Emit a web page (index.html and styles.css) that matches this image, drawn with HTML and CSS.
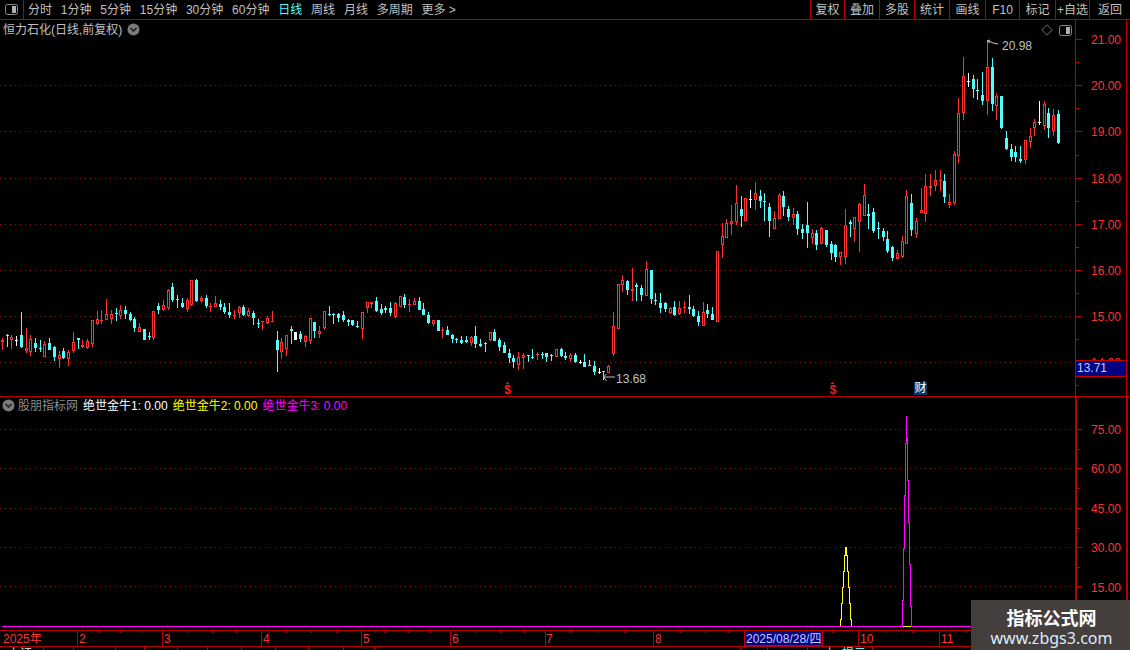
FILE: index.html
```html
<!DOCTYPE html>
<html lang="zh-CN">
<head>
<meta charset="utf-8">
<title>恒力石化 日线</title>
<link rel="stylesheet" href="styles.css">
</head>
<body>
<div class="app">
  <header class="toolbar">
    <div class="layout-btn">
      <svg class="win-icon" width="13" height="11" viewBox="0 0 13 11"><rect x=".5" y=".5" width="12" height="10" rx="2" class="win-frame"/><rect x="7" y="2" width="4" height="7" class="win-fill"/></svg>
    </div>
    <nav class="periods">
      <span>分时</span><span>1分钟</span><span>5分钟</span><span>15分钟</span><span>30分钟</span><span>60分钟</span>
      <span class="active">日线</span><span>周线</span><span>月线</span><span>多周期</span><span>更多 &gt;</span>
    </nav>
    <div class="tools">
      <span>复权</span><span>叠加</span><span>多股</span><span>统计</span><span>画线</span><span>F10</span><span>标记</span><span>+自选</span><span>返回</span>
    </div>
  </header>

  <section class="pane pane-price">
    <div class="plot">
      <svg class="chart" width="1075" height="376" viewBox="0 20 1075 376">
        <g class="grid">
          <line x1="0" x2="1075" y1="85.5" y2="85.5"/><line x1="0" x2="1075" y1="131.5" y2="131.5"/>
          <line x1="0" x2="1075" y1="178.5" y2="178.5"/><line x1="0" x2="1075" y1="224.5" y2="224.5"/>
          <line x1="0" x2="1075" y1="270.5" y2="270.5"/><line x1="0" x2="1075" y1="316.5" y2="316.5"/>
          <line x1="0" x2="1075" y1="362.5" y2="362.5"/>
        </g>
        <g id="candles" shape-rendering="crispEdges"></g>
        <path class="mark-line" d="M987 41l3 -1M987 41l3 2M987 41h2l4 2l5 1"/>
        <text class="mark-text" x="1002" y="50">20.98</text>
        <path class="mark-line" d="M603.5 377H615M603.5 377l3 -3M603.5 377l3 4"/>
        <text class="mark-text" x="616" y="383">13.68</text>
        <g class="dollar">
          <path d="M507.5 382l2 2h-4zM832.5 382l2 2h-4z"/>
          <text x="507.5" y="394">$</text>
          <text x="833" y="394">$</text>
        </g>
      </svg>
      <div class="stock-title">
        <span>恒力石化(日线,前复权)</span>
        <svg class="chevron" width="13" height="13" viewBox="0 0 13 13"><circle cx="6.5" cy="6.5" r="6" class="chev-bg"/><path d="M3.5 5l3 3l3 -3" class="chev-mark"/></svg>
      </div>
      <div class="chart-tools">
        <svg width="12" height="12" viewBox="0 0 12 12"><path d="M6 .8L11.2 6L6 11.2L.8 6z" class="diamond"/></svg>
        <svg class="win-icon" width="13" height="11" viewBox="0 0 13 11"><rect x=".5" y=".5" width="12" height="10" rx="2" class="win-frame"/><rect x="7" y="2" width="4" height="7" class="win-fill"/></svg>
      </div>
      <span class="cai">财</span>
    </div>
    <div class="axis">
      <svg class="chart" width="50" height="376" viewBox="1076 20 50 376">
        <path class="tick" d="M1076 39.5h6M1076 85.5h6M1076 131.5h6M1076 178.5h6M1076 224.5h6M1076 270.5h6M1076 316.5h6M1076 362.5h6M1076 62.5h3M1076 108.5h3M1076 155.5h3M1076 201.5h3M1076 247.5h3M1076 293.5h3M1076 339.5h3M1076 385.5h3"/>
        <g class="axis-text">
          <text x="1091" y="44">21.00</text><text x="1091" y="90">20.00</text><text x="1091" y="136">19.00</text>
          <text x="1091" y="183">18.00</text><text x="1091" y="229">17.00</text><text x="1091" y="275">16.00</text>
          <text x="1091" y="321">15.00</text><text x="1091" y="367">14.00</text>
        </g>
      </svg>
      <div class="price-tag">13.71</div>
    </div>
  </section>

  <section class="pane pane-ind">
    <div class="plot">
      <svg class="chart" width="1075" height="233" viewBox="0 397 1075 233">
        <g class="grid">
          <line x1="0" x2="1075" y1="429.5" y2="429.5"/><line x1="0" x2="1075" y1="468.5" y2="468.5"/>
          <line x1="0" x2="1075" y1="508.5" y2="508.5"/><line x1="0" x2="1075" y1="547.5" y2="547.5"/>
          <line x1="0" x2="1075" y1="586.5" y2="586.5"/>
        </g>
        <g shape-rendering="crispEdges">
          <path class="line-magenta" d="M2 626.5H1075"/>
          <path class="line-yellow" d="M840.5 626V619H841.5V603H842.5V587H843.5V571H844.5V555H845.5V547H846.5V555H847.5V571H848.5V587H849.5V603H850.5V619H851.5V626"/>
          <path class="line-yellow" d="M903 626.5H911"/>
          <path class="line-magenta" d="M902.5 626V600H903.5V548H904.5V495H905.5V443H906.5V416M907.5 438V480H908.5V522H909.5V564H910.5V606H911.5V626"/>
          <path class="line-magenta" d="M906.5 416V443M907.5 438V443"/>
        </g>
      </svg>
      <div class="ind-title">
        <svg class="chevron" width="13" height="13" viewBox="0 0 13 13"><circle cx="6.5" cy="6.5" r="6" class="chev-bg"/><path d="M3.5 5l3 3l3 -3" class="chev-mark"/></svg>
        <span class="ind-name">股朋指标网</span>
        <span class="v-white">绝世金牛1: 0.00</span>
        <span class="v-yellow">绝世金牛2: 0.00</span>
        <span class="v-magenta">绝世金牛3: 0.00</span>
      </div>
    </div>
    <div class="axis axis-heavy">
      <svg class="chart" width="49" height="233" viewBox="1077 397 49 233">
        <path class="tick" d="M1077 429.5h5M1077 468.5h5M1077 508.5h5M1077 547.5h5M1077 586.5h5M1077 449.5h3M1077 488.5h3M1077 528.5h3M1077 567.5h3M1077 606.5h3"/>
        <g class="axis-text">
          <text x="1091" y="434">75.00</text><text x="1091" y="473">60.00</text><text x="1091" y="513">45.00</text>
          <text x="1091" y="552">30.00</text><text x="1091" y="592">15.00</text>
        </g>
      </svg>
    </div>
  </section>

  <section class="xaxis">
    <svg class="chart" width="1130" height="15" viewBox="0 631 1130 15">
      <path class="tick" d="M77.5 631v15M162.5 631v15M261.5 631v15M361.5 631v15M450.5 631v15M545.5 631v15M653.5 631v15M858.5 631v15M939.5 631v15"/>
      <path class="tick" d="M98.5 631v2M120.5 631v2M141.5 631v2M187.5 631v2M212.5 631v2M236.5 631v2M286.5 631v2M311.5 631v2M336.5 631v2M384.5 631v2M408.5 631v2M430.5 631v2M475.5 631v2M500.5 631v2M524.5 631v2M570.5 631v2M597.5 631v2M624.5 631v2M680.5 631v2M705.5 631v2M728.5 631v2M832.5 631v2M885.5 631v2M912.5 631v2M965.5 631v2"/>
      <g class="axis-text">
        <text x="3" y="643">2025年</text><text x="79" y="643">2</text><text x="164" y="643">3</text><text x="263" y="643">4</text>
        <text x="363" y="643">5</text><text x="452" y="643">6</text><text x="546" y="643">7</text><text x="655" y="643">8</text>
        <text x="860" y="643">10</text><text x="941" y="643">11</text>
      </g>
      <rect class="date-box" x="744.5" y="630.5" width="78" height="15"/>
      <text class="date-text" x="746" y="643">2025/08/28/四</text>
    </svg>
  </section>

  <footer class="status">
    <svg width="1130" height="3" viewBox="0 647 1130 3">
      <path class="tick" d="M43.5 647v3M73.5 647v3M115.5 647v3M144.5 647v3M177.5 647v3M207.5 647v3M241.5 647v3M275.5 647v3M308.5 647v3M343.5 647v3M374.5 647v3M740.5 647v3M767.5 647v3M807.5 647v3M872.5 647v3"/>
      <text class="status-white" x="8" y="658">上证</text>
      <text class="status-white" x="824" y="658">上</text>
      <text class="status-cyan" x="842" y="658">提示</text>
    </svg>
  </footer>

  <aside class="watermark">
    <strong>指标公式网</strong>
    <span>www.zbgs3.com</span>
  </aside>
</div>
<script src="chart.js"></script>
</body>
</html>
```
FILE: styles.css
```css
* { box-sizing: border-box; }
html, body { margin: 0; padding: 0; background: #000; }
body { font: 12px/1 "Liberation Sans", "Noto Sans CJK SC", sans-serif; color: #c0c0c0; overflow: hidden; }
svg { display: block; }
svg text { font-family: "Liberation Sans", "Noto Sans CJK SC", sans-serif; font-size: 12px; }

.app { position: relative; width: 1130px; height: 650px; display: flex; flex-direction: column; overflow: hidden; background: #000; }

.toolbar { height: 20px; display: flex; align-items: stretch; border-bottom: 1px solid #b80000; }
.layout-btn { width: 24px; display: flex; align-items: center; padding-left: 5px; border-right: 1px solid #b80000; }
.win-frame { fill: none; stroke: #8a8a8a; }
.win-fill { fill: #b0b0b0; }
.periods { display: flex; align-items: center; gap: 8.8px; padding-left: 4px; }
.periods .active { color: #54fcfc; }
.tools { margin-left: auto; width: 320px; display: grid; grid-template-columns: 34px 35px 35px 35px 36px 34px 36px 34px 41px; }
.tools span { display: flex; align-items: center; justify-content: center; border-left: 1px solid #b80000; white-space: nowrap; }

.pane { display: flex; }
.pane-price { height: 377px; border-bottom: 1px solid #b80000; }
.pane-ind { height: 233px; }
.plot { position: relative; width: 1075px; flex: none; }
.axis { position: relative; width: 52px; flex: none; border-left: 1px solid #b80000; border-right: 1px solid #b80000; }
.axis-heavy { border-left-width: 2px; border-right-width: 2px; width: 53px; }

.grid line { stroke: #8c1414; stroke-width: 1; stroke-dasharray: 1 4; shape-rendering: crispEdges; }
.tick { stroke: #b80000; stroke-width: 1; fill: none; shape-rendering: crispEdges; }
.axis-text text { fill: #ff3232; }
.mark-line { fill: none; stroke: #c0c0c0; stroke-width: 1; }
.mark-text { fill: #c0c0c0; }
.dollar { fill: #ff1414; }
svg .dollar text { font-family: "Liberation Sans", sans-serif; font-weight: 700; font-size: 12px; text-anchor: middle; }

.stock-title { position: absolute; left: 3px; top: 3px; display: flex; align-items: center; gap: 5px; height: 13px; }
.chevron { flex: none; }
.chev-bg { fill: #7a7a7a; }
.chev-mark { fill: none; stroke: #1c1c1c; stroke-width: 1.5; }
.chart-tools { position: absolute; right: 3px; top: 4px; display: flex; align-items: center; gap: 6px; }
.diamond { fill: none; stroke: #707070; }
.cai { position: absolute; left: 914px; top: 362px; width: 13px; height: 13px; background: #003c6e; color: #fff; text-align: center; line-height: 13px; }

.price-tag { position: absolute; left: 0; right: 0; top: 340px; height: 17px; padding-left: 1px; background: #000080; border-top: 1px solid #c80000; border-bottom: 1px solid #c80000; color: #c8c8ff; line-height: 15px; }

.ind-title { position: absolute; left: 2px; top: 2px; display: flex; align-items: center; gap: 5px; height: 13px; white-space: nowrap; }
.ind-title .chevron { margin-right: -2px; }
.ind-name { color: #8c8c8c; }
.v-white { color: #fff; }
.v-yellow { color: #ffff00; }
.v-magenta { color: #ff00ff; }
.line-magenta { fill: none; stroke: #ff00ff; stroke-width: 1; }
.line-yellow { fill: none; stroke: #ffff00; stroke-width: 1; }

.xaxis { height: 17px; border-top: 1px solid #b80000; border-bottom: 1px solid #b80000; }
.date-box { fill: #000080; stroke: #c80000; stroke-width: 1; shape-rendering: crispEdges; }
.date-text { fill: #c8c8ff; }

.status { height: 3px; overflow: hidden; }
.status-white { fill: #e0e0e0; }
.status-cyan { fill: #54fcfc; }

.watermark { position: absolute; left: 971px; top: 600px; width: 159px; height: 50px; background: #443e3c; display: flex; flex-direction: column; align-items: center; gap: 2px; padding-top: 7px; padding-left: 2px; color: #fff; }
.watermark strong { font: 700 18px/20px "Noto Sans CJK SC", sans-serif; }
.watermark span { font: 400 16px/19px "Noto Sans", sans-serif; color: #dcecff; }
```
FILE: chart.js
```js
// Daily candles: [x, high, bodyTop, bodyBottom, low, kind], coordinates read at 3x, grouped by origin.
var segments = [
  { ox: 0, oy: 270, rows: [
    [7,205,210,218,240,'r'],[21,192,197,199,232,'c'],[35,195,201,212,237,'r'],[49,198,212,214,228,'w'],[64,126,195,233,234,'c'],
    [79,175,235,245,250,'r'],[91,196,207,248,258,'r'],[106,205,219,234,246,'c'],[121,212,235,237,248,'c'],[134,215,222,261,262,'r'],
    [148,205,219,240,241,'c'],[163,228,231,263,273,'c'],[178,245,256,268,294,'r'],[190,234,243,264,269,'c'],[205,240,246,269,288,'r'],
    [220,186,216,245,250,'r'],[235,204,204,212,237,'c'],[247,212,225,231,236,'r'],[262,207,213,236,237,'r'],[277,150,152,224,232,'r'],
    [292,125,148,162,165,'r'],[305,120,151,153,162,'r'],[320,87,132,150,150,'r'],[335,120,132,147,162,'r'],[349,114,130,133,155,'c'],
    [362,105,120,138,147,'r'],[376,108,120,132,148,'c'],[391,128,132,150,155,'c'],[404,142,147,174,186,'c'],[419,160,172,186,186,'r'],
    [433,177,177,212,212,'c'],[448,186,198,201,212,'c'],[461,124,124,205,212,'r'],[476,101,110,120,132,'c'],[490,90,105,122,124,'r'],
    [505,57,60,115,120,'r'],[518,40,51,90,96,'c'],[532,75,88,90,114,'c'],[547,84,99,111,114,'c'],[562,85,90,117,126,'r'],
    [575,30,30,105,108,'r'],[590,28,30,93,96,'c'],[604,78,84,93,100,'r'],[619,75,84,108,114,'c'],[632,100,108,111,126,'r'],
    [646,78,99,111,112,'r'],[661,90,102,111,120,'c'],[674,99,111,126,132,'c'],[689,99,126,135,144,'c'],[703,120,135,136,147,'r'],
    [718,108,111,129,144,'r'],[731,105,111,135,138,'c'],[746,114,123,140,141,'r'],[760,123,129,144,165,'c'],[775,147,160,162,174,'c'],
    [787,154,154,157,180,'r'],[802,138,144,159,162,'r'],[817,123,153,155,156,'r'],[832,183,210,240,308,'c'],[845,206,216,248,267,'r'],
    [859,195,195,237,258,'r'],[874,168,177,183,222,'c'],[886,186,186,210,211,'w'],[901,183,192,207,216,'c'],[916,195,198,216,231,'r'],
    [931,144,144,213,222,'r'],[943,156,156,183,204,'c'],[958,168,183,192,204,'r'],[973,123,123,174,180,'r'],[988,108,132,135,138,'c'],
    [1000,129,132,133,162,'c'],[1015,129,132,144,156,'c'],[1030,123,135,150,156,'c'],[1045,147,150,156,168,'c'],[1058,150,150,165,168,'c'],
    [1072,153,168,171,174,'c'],[1087,126,126,177,207,'r'],[1102,96,96,114,129,'r']
  ]},
  { ox: 370, oy: 250, rows: [
    [3,156,156,164,175,'r'],[18,141,153,183,186,'c'],[34,162,177,189,195,'c'],[46,168,174,180,189,'c'],[61,156,174,190,198,'c'],
    [76,156,159,201,204,'r'],[91,138,138,171,171,'r'],[103,132,141,165,174,'c'],[118,147,162,165,186,'r'],[133,144,153,165,165,'r'],
    [148,141,153,180,180,'c'],[160,159,177,195,195,'c'],[175,186,195,219,222,'c'],[190,210,210,222,228,'r'],[205,210,210,243,243,'c'],
    [217,231,240,245,264,'r'],[232,228,240,255,255,'c'],[247,252,255,267,279,'c'],[260,264,268,271,279,'c'],[274,258,270,279,282,'c'],
    [289,258,270,276,279,'c'],[304,258,261,279,288,'r'],[316,228,258,282,294,'c'],[331,267,282,288,291,'c'],[346,276,279,280,306,'c'],
    [361,246,246,270,273,'r'],[373,237,246,273,273,'c'],[388,264,270,291,303,'c'],[403,276,285,309,309,'c'],[418,297,309,324,339,'c'],
    [430,315,324,336,354,'c'],[445,306,321,345,360,'r'],[460,309,315,324,357,'r'],[475,315,316,318,336,'c'],[488,297,321,324,327,'c'],
    [502,306,312,316,330,'r'],[517,306,312,313,327,'c'],[530,309,309,321,336,'c'],[545,312,316,318,333,'c'],[560,297,297,321,321,'r'],
    [574,294,297,318,321,'c'],[587,306,318,324,330,'c'],[601,309,315,327,333,'r'],[616,309,315,336,339,'c'],[631,330,336,338,342,'w'],
    [643,312,336,351,351,'c'],[658,330,346,348,348,'c'],[673,333,348,366,375,'c'],[688,354,366,368,372,'w'],[700,364,365,367,390,'c'],
    [715,345,348,369,369,'r'],[730,186,228,312,318,'r'],[745,102,102,237,237,'r'],[757,75,90,105,126,'r'],[772,90,93,120,135,'c'],
    [787,54,117,123,153,'r'],[799,99,105,111,153,'c'],[814,105,114,135,153,'c'],[829,33,57,138,138,'r'],[844,60,60,147,162,'c'],
    [856,129,150,152,165,'c'],[871,129,159,174,189,'c'],[886,156,159,177,186,'c'],[901,171,174,189,192,'r'],[913,153,171,195,198,'c'],
    [928,153,174,192,195,'r'],[943,153,171,174,189,'r'],[958,135,171,177,192,'c'],[970,168,177,198,201,'c'],[985,183,198,216,228,'c'],
    [1000,156,186,228,228,'r'],[1012,162,180,192,204,'c'],[1027,171,192,210,210,'c'],[1042,3,3,218,218,'r']
  ]},
  { ox: 700, oy: 170, rows: [
    [67,160,198,225,264,'r'],[79,148,160,204,204,'r'],[94,105,153,162,195,'r'],[109,45,99,156,165,'r'],[124,78,117,138,171,'c'],
    [136,84,84,153,153,'r'],[151,60,87,89,114,'w'],[166,36,69,90,120,'r'],[181,60,78,93,114,'c'],[193,69,93,96,153,'c'],
    [208,99,111,153,201,'c'],[223,123,144,177,177,'r'],[238,69,75,147,147,'r'],[250,63,78,111,138,'c'],[265,108,117,141,153,'c'],
    [280,114,132,144,165,'r'],[292,123,132,177,195,'c'],[307,162,177,189,207,'c'],[322,96,165,189,234,'c'],[337,177,189,204,222,'r'],
    [349,180,189,225,240,'c'],[364,171,174,222,222,'r'],[379,180,180,225,231,'c'],[394,213,222,249,270,'c'],[406,222,225,261,276,'c'],
    [421,246,246,261,285,'r'],[436,117,165,261,282,'r'],[451,150,156,162,201,'c'],[463,141,141,177,216,'r'],[478,99,102,156,246,'r'],
    [493,42,75,138,138,'r'],[505,102,132,138,177,'c'],[520,114,126,183,189,'c'],[535,156,174,177,207,'c'],[550,174,183,201,213,'c'],
    [562,183,207,243,249,'c'],[577,228,231,264,273,'c'],[592,240,249,267,267,'r'],[607,198,213,261,264,'r'],[619,60,78,222,222,'r'],
    [634,72,99,180,198,'c'],[649,144,153,192,204,'r'],[664,54,120,129,129,'r'],[676,12,48,132,156,'r'],[691,12,48,54,78,'r'],
    [706,0,30,48,63,'r'],[721,0,30,33,63,'r'],[733,12,33,81,99,'c'],[748,72,96,105,114,'r']
  ]},
  { ox: 940, oy: 30, rows: [
    [42,364,373,519,525,'r'],[55,205,250,380,400,'r'],[70,82,140,250,272,'r'],[85,130,155,157,172,'w'],[100,135,148,178,205,'c'],
    [112,147,180,182,212,'c'],[127,126,195,213,225,'c'],[142,36,112,215,255,'r'],[157,85,112,222,245,'c'],[169,190,198,228,270,'r'],
    [184,198,198,295,298,'c'],[199,303,324,357,360,'c'],[214,342,357,381,395,'c'],[226,348,366,381,396,'c'],[241,350,387,393,400,'c'],
    [256,330,330,390,402,'r'],[271,295,318,336,354,'r'],[283,268,277,296,318,'r'],[298,213,277,279,285,'w'],[313,213,222,288,300,'r'],
    [325,235,249,294,324,'c'],[340,237,255,303,318,'r'],[355,240,252,339,342,'c']
  ]}
];

var colours = { r: '#ff3232', c: '#54fcfc', w: '#ffffff' };
var out = '';

function rect(x, y, w, h, fill) {
  return '<rect x="' + x + '" y="' + y + '" width="' + w + '" height="' + h + '" fill="' + fill + '"/>';
}

segments.forEach(function (seg) {
  seg.rows.forEach(function (row) {
    var x = Math.floor(seg.ox + row[0] / 3);
    var hi = Math.floor(seg.oy + row[1] / 3);
    var top = Math.floor(seg.oy + row[2] / 3);
    var bot = Math.floor(seg.oy + row[3] / 3);
    var lo = Math.floor(seg.oy + row[4] / 3);
    var fill = colours[row[5]];
    var h = Math.max(bot - top, 1);
    out += rect(x, hi, 1, Math.max(lo - hi, 1), fill);
    out += rect(x - 1, top, 3, h, fill);
    if (row[5] === 'r' && h > 2) out += rect(x, top + 1, 1, h - 2, '#000');
  });
});

document.getElementById('candles').innerHTML = out;
```
